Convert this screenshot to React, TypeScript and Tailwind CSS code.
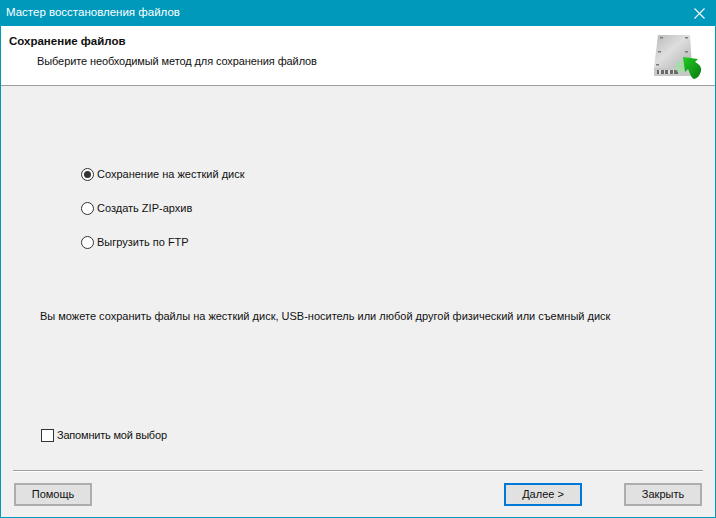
const options = [
  { id: 1, label: "Сохранение на жесткий диск", checked: true },
  { id: 2, label: "Создать ZIP-архив", checked: false },
  { id: 3, label: "Выгрузить по FTP", checked: false },
];

const DiskIcon = () => (
  <svg width="50" height="48" viewBox="0 0 50 48">
    <defs>
      <linearGradient id="plate" x1="0" y1="0" x2="1" y2="1">
        <stop offset="0" stopColor="#b8b8b8" />
        <stop offset="0.45" stopColor="#dedede" />
        <stop offset="1" stopColor="#b0b0b0" />
      </linearGradient>
      <linearGradient id="arrow" x1="0" y1="0" x2="1" y2="1">
        <stop offset="0" stopColor="#22cc22" />
        <stop offset="1" stopColor="#087a10" />
      </linearGradient>
    </defs>
    <path d="M5 1H37L39 34H1Z" fill="url(#plate)" />
    <path d="M1 34H39V42H1Z" fill="#c8c8c8" />
    <path d="M4 36H25V40H4Z" fill="#6a6a6a" />
    <path d="M6 36h2v4H6zM11 36h1v4h-1zM15 36h2v4h-2zM20 36h1v4h-1z" fill="#e0e0e0" />
    <g fill="#7a7a7a">
      <rect x="7" y="3" width="3" height="1.5" />
      <rect x="32" y="3" width="3" height="1.5" />
      <rect x="5" y="17" width="3" height="1.5" />
      <rect x="32" y="17" width="3" height="1.5" />
      <rect x="3" y="30" width="3" height="1.5" />
    </g>
    <circle cx="28" cy="33" r="6" fill="#9be89b" opacity="0.6" />
    <path d="M30 23L45 25L42 28C46 30 49 33 48 37C47 41 45 44 41 45C38 44 37 39 35 35L32 38Z" fill="url(#arrow)" />
  </svg>
);

const Btn = ({ label, active }: { label: string; active?: boolean }) => (
  <button
    className={`w-[78px] h-[23px] bg-[#e1e1e1] text-[11px] leading-none text-[#101010] border-2 ${
      active ? "border-[#0078d7]" : "border-[#adadad]"
    }`}
  >
    {label}
  </button>
);

export default function App() {
  return (
    <div className="w-[716px] h-[518px] flex flex-col bg-[#f0f0f0] border-x border-b border-[#0099bc] font-['Liberation_Sans',sans-serif] text-[11px] text-[#101010] overflow-hidden">
      <div className="h-[26px] -mx-px bg-[#0099bc] flex items-center justify-between pl-[6px] pr-[11px] text-[11.5px] text-white shrink-0">
        <span>Мастер восстановления файлов</span>
        <svg width="11" height="11" viewBox="0 0 11 11" stroke="#ffffff" strokeWidth="1.1">
          <path d="M0.5 0.5L10.5 10.5M10.5 0.5L0.5 10.5" />
        </svg>
      </div>
      <div className="h-[60px] bg-white border-b border-[#a0a0a0] flex justify-between shrink-0 pl-[8px] pr-[12px]">
        <div>
          <div className="mt-[7px] font-bold text-[11.5px] leading-[16px]">Сохранение файлов</div>
          <div className="mt-[4px] ml-[28px] leading-[16px] tracking-[-0.1px]">Выберите необходимый метод для сохранения файлов</div>
        </div>
        <div className="mt-[8px]">
          <DiskIcon />
        </div>
      </div>
      <div className="flex-1 flex flex-col">
        <div className="mt-[80px] ml-[80px] flex flex-col gap-[18.25px]">
          {options.map((o) => (
            <label key={o.id} className="flex items-center gap-[3px] h-[16px]">
              <span className="w-[13px] h-[13px] rounded-full border border-[#333333] bg-white flex items-center justify-center">
                {o.checked && <span className="w-[7px] h-[7px] rounded-full bg-[#333333]" />}
              </span>
              <span>{o.label}</span>
            </label>
          ))}
        </div>
        <p className="mt-[57.5px] ml-[39px] leading-[16px]">
          Вы можете сохранить файлы на жесткий диск, USB-носитель или любой другой физический или съемный диск
        </p>
        <label className="mt-[103px] ml-[40px] flex items-center gap-[3px] h-[16px]">
          <span className="w-[13px] h-[13px] border border-[#333333] bg-white" />
          <span className="tracking-[-0.2px]">Запомнить мой выбор</span>
        </label>
        <div className="mt-[27px] ml-[12px] mr-[12px] h-[2px] border-t border-[#a0a0a0] bg-white" />
        <div className="mt-[11px] ml-[13px] mr-[13px] flex">
          <Btn label="Помощь" />
          <div className="ml-auto flex gap-[42px]">
            <Btn label="Далее >" active />
            <Btn label="Закрыть" />
          </div>
        </div>
      </div>
    </div>
  );
}
